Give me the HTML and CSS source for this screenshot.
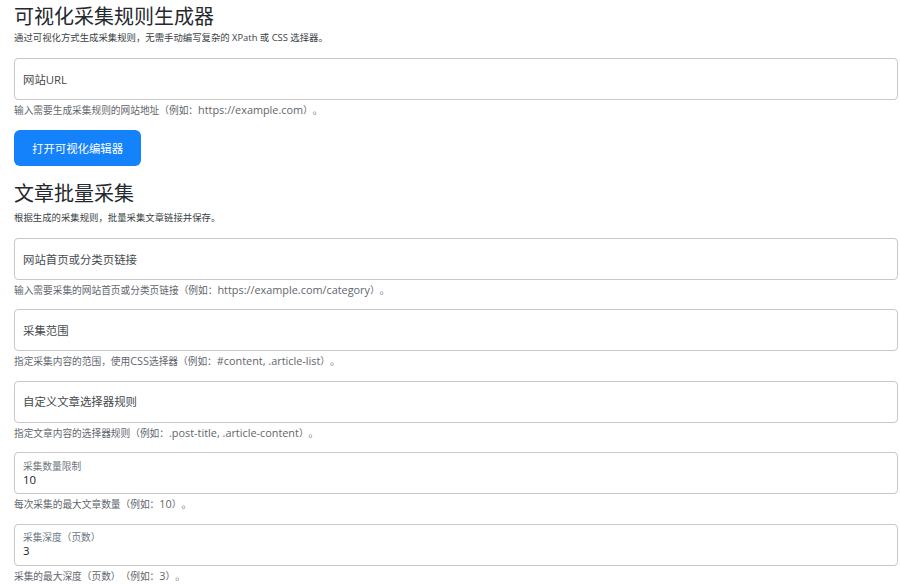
FILE: index.html
```html
<!DOCTYPE html>
<html lang="zh-CN">
<head>
<meta charset="utf-8">
<title>可视化采集规则生成器</title>
<link rel="stylesheet" href="styles.css">
</head>
<body>
<section class="section">
  <h1 class="title">可视化采集规则生成器</h1>
  <p class="lead">通过可视化方式生成采集规则，无需手动编写复杂的 XPath 或 CSS 选择器。</p>
  <div class="field field-first">
    <input class="control" type="text" placeholder="网站URL">
    <div class="help">输入需要生成采集规则的网站地址（例如：<span class="ex">https://example.com</span>）。</div>
  </div>
  <button class="btn" type="button">打开可视化编辑器</button>
</section>
<section class="section">
  <h2 class="title title-second">文章批量采集</h2>
  <p class="lead lead-second">根据生成的采集规则，批量采集文章链接并保存。</p>
  <div class="field">
    <input class="control" type="text" placeholder="网站首页或分类页链接">
    <div class="help">输入需要采集的网站首页或分类页链接（例如：<span class="ex">https://example.com/category</span>）。</div>
  </div>
  <div class="field">
    <input class="control" type="text" placeholder="采集范围">
    <div class="help">指定采集内容的范围，使用<span class="ex">CSS</span>选择器（例如：<span class="ex">#content, .article-list</span>）。</div>
  </div>
  <div class="field">
    <input class="control" type="text" placeholder="自定义文章选择器规则">
    <div class="help">指定文章内容的选择器规则（例如：<span class="ex">.post-title, .article-content</span>）。</div>
  </div>
  <div class="field">
    <label class="filled">
      <span class="filled-label">采集数量限制</span>
      <input class="filled-input" type="text" value="10">
    </label>
    <div class="help">每次采集的最大文章数量（例如：<span class="ex">10</span>）。</div>
  </div>
  <div class="field">
    <label class="filled">
      <span class="filled-label">采集深度（页数）</span>
      <input class="filled-input" type="text" value="3">
    </label>
    <div class="help">采集的最大深度（页数）（例如：<span class="ex">3</span>）。</div>
  </div>
</section>
</body>
</html>
```
FILE: styles.css
```css
html, body {
  background: #ffffff;
}
body {
  margin: 0;
  padding: 4.5px 2px 0 14px;
  font-family: "Open Sans", "Noto Sans CJK SC", sans-serif;
  color: #212529;
  text-spacing-trim: space-all;
}
.title {
  margin: 0;
  font-size: 20px;
  line-height: 24px;
  font-weight: 400;
  color: #25292d;
}
.title-second {
  margin-top: 16px;
}
.lead {
  margin: 1.5px 0 13px;
  font-size: 9.4px;
  line-height: 15px;
  color: #3a3f44;
}
.lead-second {
  margin-top: 4px;
}
.field {
  margin-bottom: 11.4px;
}
.field-first {
  margin-bottom: 12px;
}
.control {
  display: block;
  width: 100%;
  height: 42px;
  box-sizing: border-box;
  margin: 0;
  padding: 0 8px;
  border: 1px solid #c8c8c8;
  border-radius: 4px;
  background: #ffffff;
  font-family: inherit;
  font-size: 11.4px;
  color: #212529;
  outline: none;
  text-spacing-trim: space-all;
}
.control::placeholder {
  color: #45494d;
  opacity: 1;
}
.help {
  margin-top: 3px;
  font-size: 9.7px;
  line-height: 15px;
  color: #5f666d;
}
.ex {
  font-size: 1.12em;
  line-height: 1;
}
.btn {
  display: block;
  height: 36px;
  padding: 0 18px;
  border: none;
  border-radius: 6px;
  background: #1482fb;
  color: #ffffff;
  font-family: inherit;
  font-size: 11.4px;
  cursor: pointer;
}
.filled {
  display: flex;
  flex-direction: column;
  height: 42px;
  box-sizing: border-box;
  padding: 6.5px 8px 0;
  border: 1px solid #c8c8c8;
  border-radius: 4px;
  background: #ffffff;
}
.filled-label {
  font-size: 9.7px;
  line-height: 13px;
  color: #6c757d;
}
.filled-input {
  display: block;
  margin: 0;
  padding: 0;
  border: none;
  outline: none;
  background: transparent;
  font-family: inherit;
  font-size: 11.4px;
  line-height: 13px;
  height: 13px;
  color: #212529;
}
```
